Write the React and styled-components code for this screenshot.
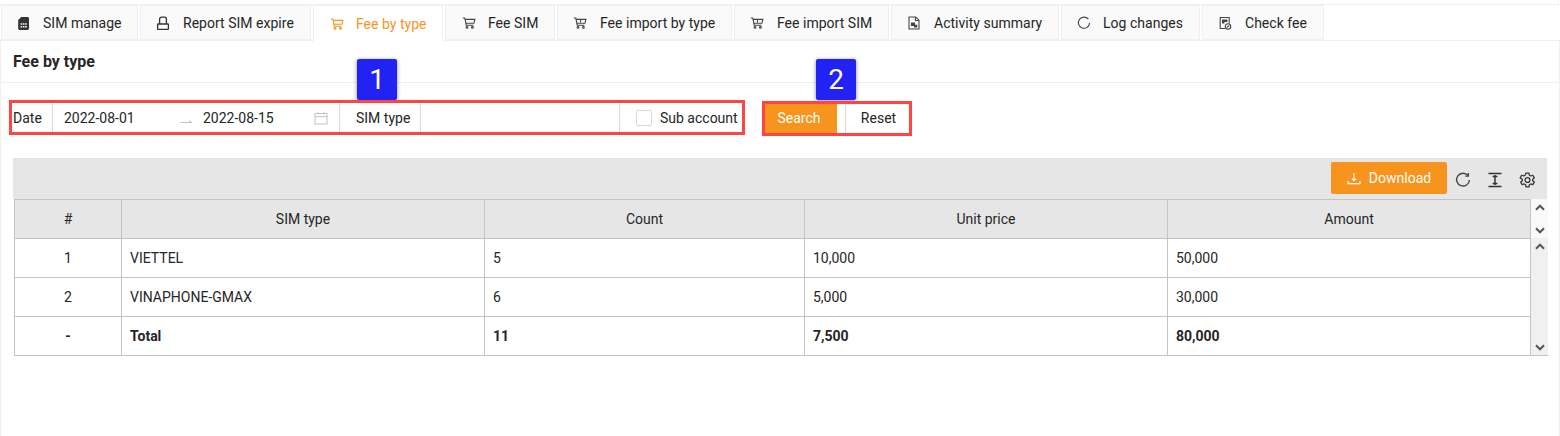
import React from 'react';
import styled, { createGlobalStyle } from 'styled-components';

const Global = createGlobalStyle`
  html, body { margin: 0; padding: 0; background: #fff; }
  body { font-family: Roboto, "Liberation Sans", sans-serif; font-size: 14px; color: #262626; }
  * { box-sizing: border-box; }
`;

const Page = styled.div`
  position: relative;
  width: 1560px;
  height: 436px;
  overflow: hidden;
  display: flex;
  flex-direction: column;
`;
const TopStrip = styled.div`
  height: 5px;
  flex: none;
  border-bottom: 1px solid #f0f0f0;
  border-right: 1px solid #f0f0f0;
  margin-right: 1px;
`;
const TabBar = styled.div`
  display: flex;
  gap: 2px;
  height: 36px;
  flex: none;
  padding-left: 1px;
  border-bottom: 1px solid #f0f0f0;
`;
const Tab = styled.div`
  display: flex;
  align-items: center;
  height: ${p => (p.$active ? '36px' : '35px')};
  width: ${p => p.$w}px;
  padding-left: ${p => p.$pad}px;
  gap: ${p => p.$gap}px;
  background: ${p => (p.$active ? '#fff' : '#fafafa')};
  color: ${p => (p.$active ? '#f7941d' : '#262626')};
  border: 1px solid #f0f0f0;
  border-bottom: ${p => (p.$active ? '0' : '1px solid #f0f0f0')};
  white-space: nowrap;
  font-size: 14px;
  letter-spacing: 0.02px;
`;
const Panel = styled.div`
  flex: 1;
  border-left: 1px solid #f0f0f0;
  border-right: 1px solid #f0f0f0;
  display: flex;
  flex-direction: column;
`;
const TitleBar = styled.div`
  height: 42px;
  flex: none;
  display: flex;
  align-items: center;
  padding-left: 12px;
  font-weight: 700;
  font-size: 16px;
  color: #262626;
  border-bottom: 1px solid #f0f0f0;
`;
const FilterRow = styled.div`
  display: flex;
  height: 30px;
  margin: 20px 0 0 12px;
  flex: none;
`;
const FieldGroup = styled.div`
  display: flex;
  align-items: stretch;
  width: 728px;
  line-height: 31px;
`;
const FieldLabel = styled.div`
  width: ${p => p.$w}px;
  padding-left: ${p => p.$pad}px;
  border-right: 1px solid #d9d9d9;
  flex: none;
`;
const DateRange = styled.div`
  width: 287px;
  flex: none;
  display: flex;
  align-items: center;
  padding-left: 11px;
  border-right: 1px solid #d9d9d9;
`;
const DateValue = styled.span`
  width: ${p => p.$w}px;
  margin-left: ${p => p.$gap || 0}px;
  flex: none;
`;
const RangeArrow = styled.span`
  display: flex;
  margin-top: 3px;
`;
const SelectBox = styled.div`
  width: 199px;
  flex: none;
  border-right: 1px solid #d9d9d9;
`;
const CheckWrap = styled.label`
  display: flex;
  align-items: center;
  padding-left: 16px;
  gap: 8px;
`;
const CheckBox = styled.span`
  width: 16px;
  height: 16px;
  border: 1px solid #d9d9d9;
  border-radius: 2px;
  background: #fff;
`;
const ButtonGroup = styled.div`
  display: flex;
  margin-left: 24px;
`;
const SearchBtn = styled.div`
  width: 72px;
  padding-right: 4px;
  background: #f7941d;
  color: #fff;
  text-align: center;
  line-height: 31px;
`;
const ResetBtn = styled.div`
  width: 66px;
  margin-left: 8px;
  border-left: 1px solid #d9d9d9;
  text-align: center;
  line-height: 31px;
`;
const GridArea = styled.div`
  margin: 25px 12px 0 12px;
  display: flex;
  flex-direction: column;
`;
const Toolbar = styled.div`
  height: 41px;
  background: #e6e6e6;
  display: flex;
  align-items: center;
  justify-content: flex-end;
  padding-right: 4px;
`;
const DownloadBtn = styled.div`
  width: 116px;
  height: 32px;
  background: #f7941d;
  color: #fff;
  border-radius: 2px;
  display: flex;
  align-items: center;
  justify-content: center;
  gap: 8px;
  margin-top: -1px;
`;
const ToolIcon = styled.div`
  width: 32px;
  height: 20px;
  margin-top: 3px;
  display: flex;
  align-items: center;
  justify-content: center;
  color: #333;
`;
const TableWrap = styled.div`
  display: flex;
  flex-direction: column;
  margin-left: 1px;
`;
const TableLine = styled.div`
  display: flex;
  margin-top: ${p => (p.$body ? '-1px' : '0')};
`;
const Table = styled.table`
  width: 1516px;
  table-layout: fixed;
  border-collapse: collapse;
  flex: none;
  font-size: 14px;
`;
const Cell = styled.td`
  height: 39px;
  padding: 0 8px;
  border: 1px solid #c4c4c4;
  text-align: ${p => (p.$center ? 'center' : 'left')};
  font-weight: ${p => (p.$bold ? 700 : 400)};
  color: #262626;
`;
const HeadCell = styled.th`
  height: 39px;
  padding: 0 8px;
  border: 1px solid #c4c4c4;
  background: #e6e6e6;
  font-weight: 400;
  text-align: center;
  color: #262626;
`;
const Scroll = styled.div`
  width: 17px;
  flex: none;
  background: ${p => p.$bg};
  display: flex;
  flex-direction: column;
  justify-content: space-between;
  align-items: center;
  padding: ${p => p.$pad};
  border-bottom: ${p => (p.$last ? '1px solid #c4c4c4' : '0')};
`;
const Callout = styled.div`
  position: absolute;
  left: ${p => p.$x}px;
  top: 59px;
  width: 40px;
  height: 41px;
  background: #2222f5;
  color: #fff;
  border-radius: 2px;
  font-size: 28px;
  display: flex;
  align-items: center;
  justify-content: center;
  box-shadow: 0 1px 4px rgba(0, 0, 0, 0.45);
`;
const RedBox = styled.div`
  position: absolute;
  left: ${p => p.$x}px;
  top: ${p => p.$y}px;
  width: ${p => p.$w}px;
  height: ${p => p.$h}px;
  border: 3px solid #ff4444;
`;

const S = { fill: 'none', stroke: 'currentColor', strokeWidth: 1.1 };

const Cart = ({ color }) => (
  <svg width="14" height="14" viewBox="0 0 14 14" {...S} style={{ color: color || '#444' }}>
    <path d="M0.8 2h2l1.4 7.2h7.2" />
    <path d="M2.9 3.4h10l-1 3.9H3.7" />
    <circle cx="5" cy="11.4" r="0.9" />
    <circle cx="10.4" cy="11.4" r="0.9" />
  </svg>
);
const CartBold = () => (
  <svg width="14" height="14" viewBox="0 0 14 14" {...S} style={{ color: '#444' }}>
    <path d="M0.8 2h2l1.4 7.2h7.2" />
    <path d="M2.9 3.4h10l-1 3.9H3.7" />
    <path d="M7.5 4v2.5" />
    <circle cx="5" cy="11.4" r="0.9" />
    <circle cx="10.4" cy="11.4" r="0.9" />
  </svg>
);
const Sim = () => (
  <svg width="14" height="15" viewBox="0 0 14 15" style={{ color: '#333', marginTop: 1 }}>
    <path d="M4.2 1h6.4a1.4 1.4 0 0 1 1.4 1.4v10.2a1.4 1.4 0 0 1-1.4 1.4H2.6a1.4 1.4 0 0 1-1.4-1.4V4z" fill="currentColor" />
    <path d="M3.6 7.2h1.6v1.6H3.6zM5.9 7.2h1.6v1.6H5.9zM8.2 7.2h1.6v1.6H8.2zM3.6 10h1.6v1.6H3.6zM5.9 10h1.6v1.6H5.9zM8.2 10h1.6v1.6H8.2z" fill="#fff" />
  </svg>
);
const Lock = () => (
  <svg width="14" height="14" viewBox="0 0 14 14" fill="none" stroke="currentColor" strokeWidth="1.3" style={{ color: '#333' }}>
    <rect x="1.6" y="8" width="10.8" height="5.4" rx="0.6" />
    <path d="M3.6 8V3.2a2 2 0 0 1 2-2h2.8a2 2 0 0 1 2 2V8" />
  </svg>
);
const Doc = () => (
  <svg width="14" height="14" viewBox="0 0 14 14" {...S} style={{ color: '#444' }}>
    <path d="M2 1h6.8L12 4.2v8.8H2z" />
    <path d="M8.4 1.3v3.2h3.3" />
    <path d="M4.5 7h3v2.4h-3z" fill="currentColor" />
    <path d="M7.5 9.4h2.2v1.5H7.5z" fill="currentColor" />
  </svg>
);
const Refresh = ({ size = 14, width = 1.1, tip = true }) => (
  <svg width={size} height={size} viewBox="0 0 14 14" fill="none" stroke="currentColor" strokeWidth={width} style={{ color: '#444' }}>
    <path d="M11.4 3.2A5.6 5.6 0 1 0 12.6 7" />
    {tip && <path d="M11.7 0.9v2.7H9" />}
  </svg>
);
const CheckDoc = () => (
  <svg width="14" height="14" viewBox="0 0 14 14" {...S} style={{ color: '#444' }}>
    <path d="M7 12.5H2.2V1.5h9v5.8" />
    <path d="M4 3.6h5.4v2.3H6.4v1.7H4z" fill="currentColor" stroke="none" />
    <circle cx="10" cy="10.5" r="2.7" />
    <path d="M8.8 11.7l2.4-2.4" />
  </svg>
);
const Calendar = () => (
  <svg width="14" height="14" viewBox="0 0 14 14" fill="none" stroke="#c4c4c4" strokeWidth="1">
    <rect x="1" y="2.5" width="12" height="10.5" />
    <path d="M1 5.6h12M4 1v2.5M10 1v2.5" />
  </svg>
);
const Arrow = () => (
  <svg width="13" height="8" viewBox="0 0 13 8" fill="none" stroke="#c4c4c4" strokeWidth="1">
    <path d="M0.5 6.5h11.5L9 4.5" />
  </svg>
);
const DownloadIcon = () => (
  <svg width="14" height="14" viewBox="0 0 14 14" fill="none" stroke="#fff" strokeWidth="1.1">
    <path d="M1 10v2.6h12V10" />
    <path d="M7 2v7.4M5 7.6l2 2 2-2" />
  </svg>
);
const Height = () => (
  <svg width="16" height="16" viewBox="0 0 16 16" fill="none" stroke="#333" strokeWidth="1.5">
    <path d="M1.5 1.5h13M1.5 14.5h13" />
    <path d="M8 3v10" />
    <path d="M5.6 4.5h4.8M5.6 11.5h4.8" />
  </svg>
);
const Gear = () => (
  <svg width="17" height="17" viewBox="0 0 16 16" fill="none" stroke="#333" strokeWidth="1.2" strokeLinejoin="round">
    <path d="M6.6 1h2.8l.4 2 1.3.75 1.9-.7 1.4 2.45-1.5 1.3v1.4l1.5 1.3-1.4 2.45-1.9-.7-1.3.75-.4 2H6.6l-.4-2-1.3-.75-1.9.7-1.4-2.45 1.5-1.3V6.8L1.1 5.5l1.4-2.45 1.9.7 1.3-.75z" />
    <circle cx="8" cy="7.5" r="2.3" />
  </svg>
);
const Chevron = ({ up }) => (
  <svg width="10" height="7" viewBox="0 0 10 7" fill="none" stroke="#555" strokeWidth="2">
    <path d={up ? 'M1 5.7l4-4 4 4' : 'M1 1.3l4 4 4-4'} />
  </svg>
);

const tabs = [
  { label: 'SIM manage', icon: <Sim />, w: 137, pad: 15, gap: 12 },
  { label: 'Report SIM expire', icon: <Lock />, w: 171, pad: 15, gap: 13 },
  { label: 'Fee by type', icon: <Cart color="#f7941d" />, w: 130, pad: 16, gap: 12, active: true },
  { label: 'Fee SIM', icon: <Cart />, w: 110, pad: 16, gap: 12 },
  { label: 'Fee import by type', icon: <CartBold />, w: 175, pad: 15, gap: 13 },
  { label: 'Fee import SIM', icon: <CartBold />, w: 155, pad: 15, gap: 13 },
  { label: 'Activity summary', icon: <Doc />, w: 168, pad: 15, gap: 13 },
  { label: 'Log changes', icon: <Refresh tip={false} />, w: 139, pad: 15, gap: 12 },
  { label: 'Check fee', icon: <CheckDoc />, w: 122, pad: 15, gap: 13 },
];

const rows = [
  ['1', 'VIETTEL', '5', '10,000', '50,000'],
  ['2', 'VINAPHONE-GMAX', '6', '5,000', '30,000'],
];

const Cols = () => (
  <colgroup>
    <col style={{ width: 107 }} />
    <col style={{ width: 363 }} />
    <col style={{ width: 320 }} />
    <col style={{ width: 363 }} />
    <col style={{ width: 363 }} />
  </colgroup>
);

export default function App() {
  return (
    <Page>
      <Global />
      <TopStrip />
      <TabBar>
        {tabs.map(t => (
          <Tab key={t.label} $w={t.w} $pad={t.pad} $gap={t.gap} $active={t.active}>
            {t.icon}
            <span>{t.label}</span>
          </Tab>
        ))}
      </TabBar>
      <Panel>
        <TitleBar>Fee by type</TitleBar>
        <FilterRow>
          <FieldGroup>
            <FieldLabel $w={40} $pad={0}>Date</FieldLabel>
            <DateRange>
              <DateValue $w={116}>2022-08-01</DateValue>
              <RangeArrow><Arrow /></RangeArrow>
              <DateValue $w={111} $gap={10}>2022-08-15</DateValue>
              <Calendar />
            </DateRange>
            <FieldLabel $w={81} $pad={16}>SIM type</FieldLabel>
            <SelectBox />
            <CheckWrap>
              <CheckBox />
              <span>Sub account</span>
            </CheckWrap>
          </FieldGroup>
          <ButtonGroup>
            <SearchBtn>Search</SearchBtn>
            <ResetBtn>Reset</ResetBtn>
          </ButtonGroup>
        </FilterRow>
        <GridArea>
          <Toolbar>
            <DownloadBtn>
              <DownloadIcon />
              <span>Download</span>
            </DownloadBtn>
            <ToolIcon><Refresh size={16} width={1.2} /></ToolIcon>
            <ToolIcon><Height /></ToolIcon>
            <ToolIcon><Gear /></ToolIcon>
          </Toolbar>
          <TableWrap>
            <TableLine>
              <Table>
                <Cols />
                <thead>
                  <tr>
                    {['#', 'SIM type', 'Count', 'Unit price', 'Amount'].map(h => (
                      <HeadCell key={h}>{h}</HeadCell>
                    ))}
                  </tr>
                </thead>
              </Table>
              <Scroll $bg="#f9f9f9" $pad="5px 0 5px">
                <Chevron up />
                <Chevron />
              </Scroll>
            </TableLine>
            <TableLine $body>
              <Table>
                <Cols />
                <tbody>
                  {rows.map(r => (
                    <tr key={r[0]}>
                      <Cell $center>{r[0]}</Cell>
                      <Cell>{r[1]}</Cell>
                      <Cell>{r[2]}</Cell>
                      <Cell>{r[3]}</Cell>
                      <Cell>{r[4]}</Cell>
                    </tr>
                  ))}
                  <tr>
                    <Cell $center $bold>-</Cell>
                    <Cell $bold>Total</Cell>
                    <Cell $bold>11</Cell>
                    <Cell $bold>7,500</Cell>
                    <Cell $bold>80,000</Cell>
                  </tr>
                </tbody>
              </Table>
              <Scroll $bg="#f0f0f0" $pad="5px 0 4px" $last>
                <Chevron up />
                <Chevron />
              </Scroll>
            </TableLine>
          </TableWrap>
        </GridArea>
      </Panel>
      <Callout $x={357}>1</Callout>
      <Callout $x={816}>2</Callout>
      <RedBox $x={9} $y={100} $w={736} $h={35} />
      <RedBox $x={762} $y={101} $w={150} $h={35} />
    </Page>
  );
}
